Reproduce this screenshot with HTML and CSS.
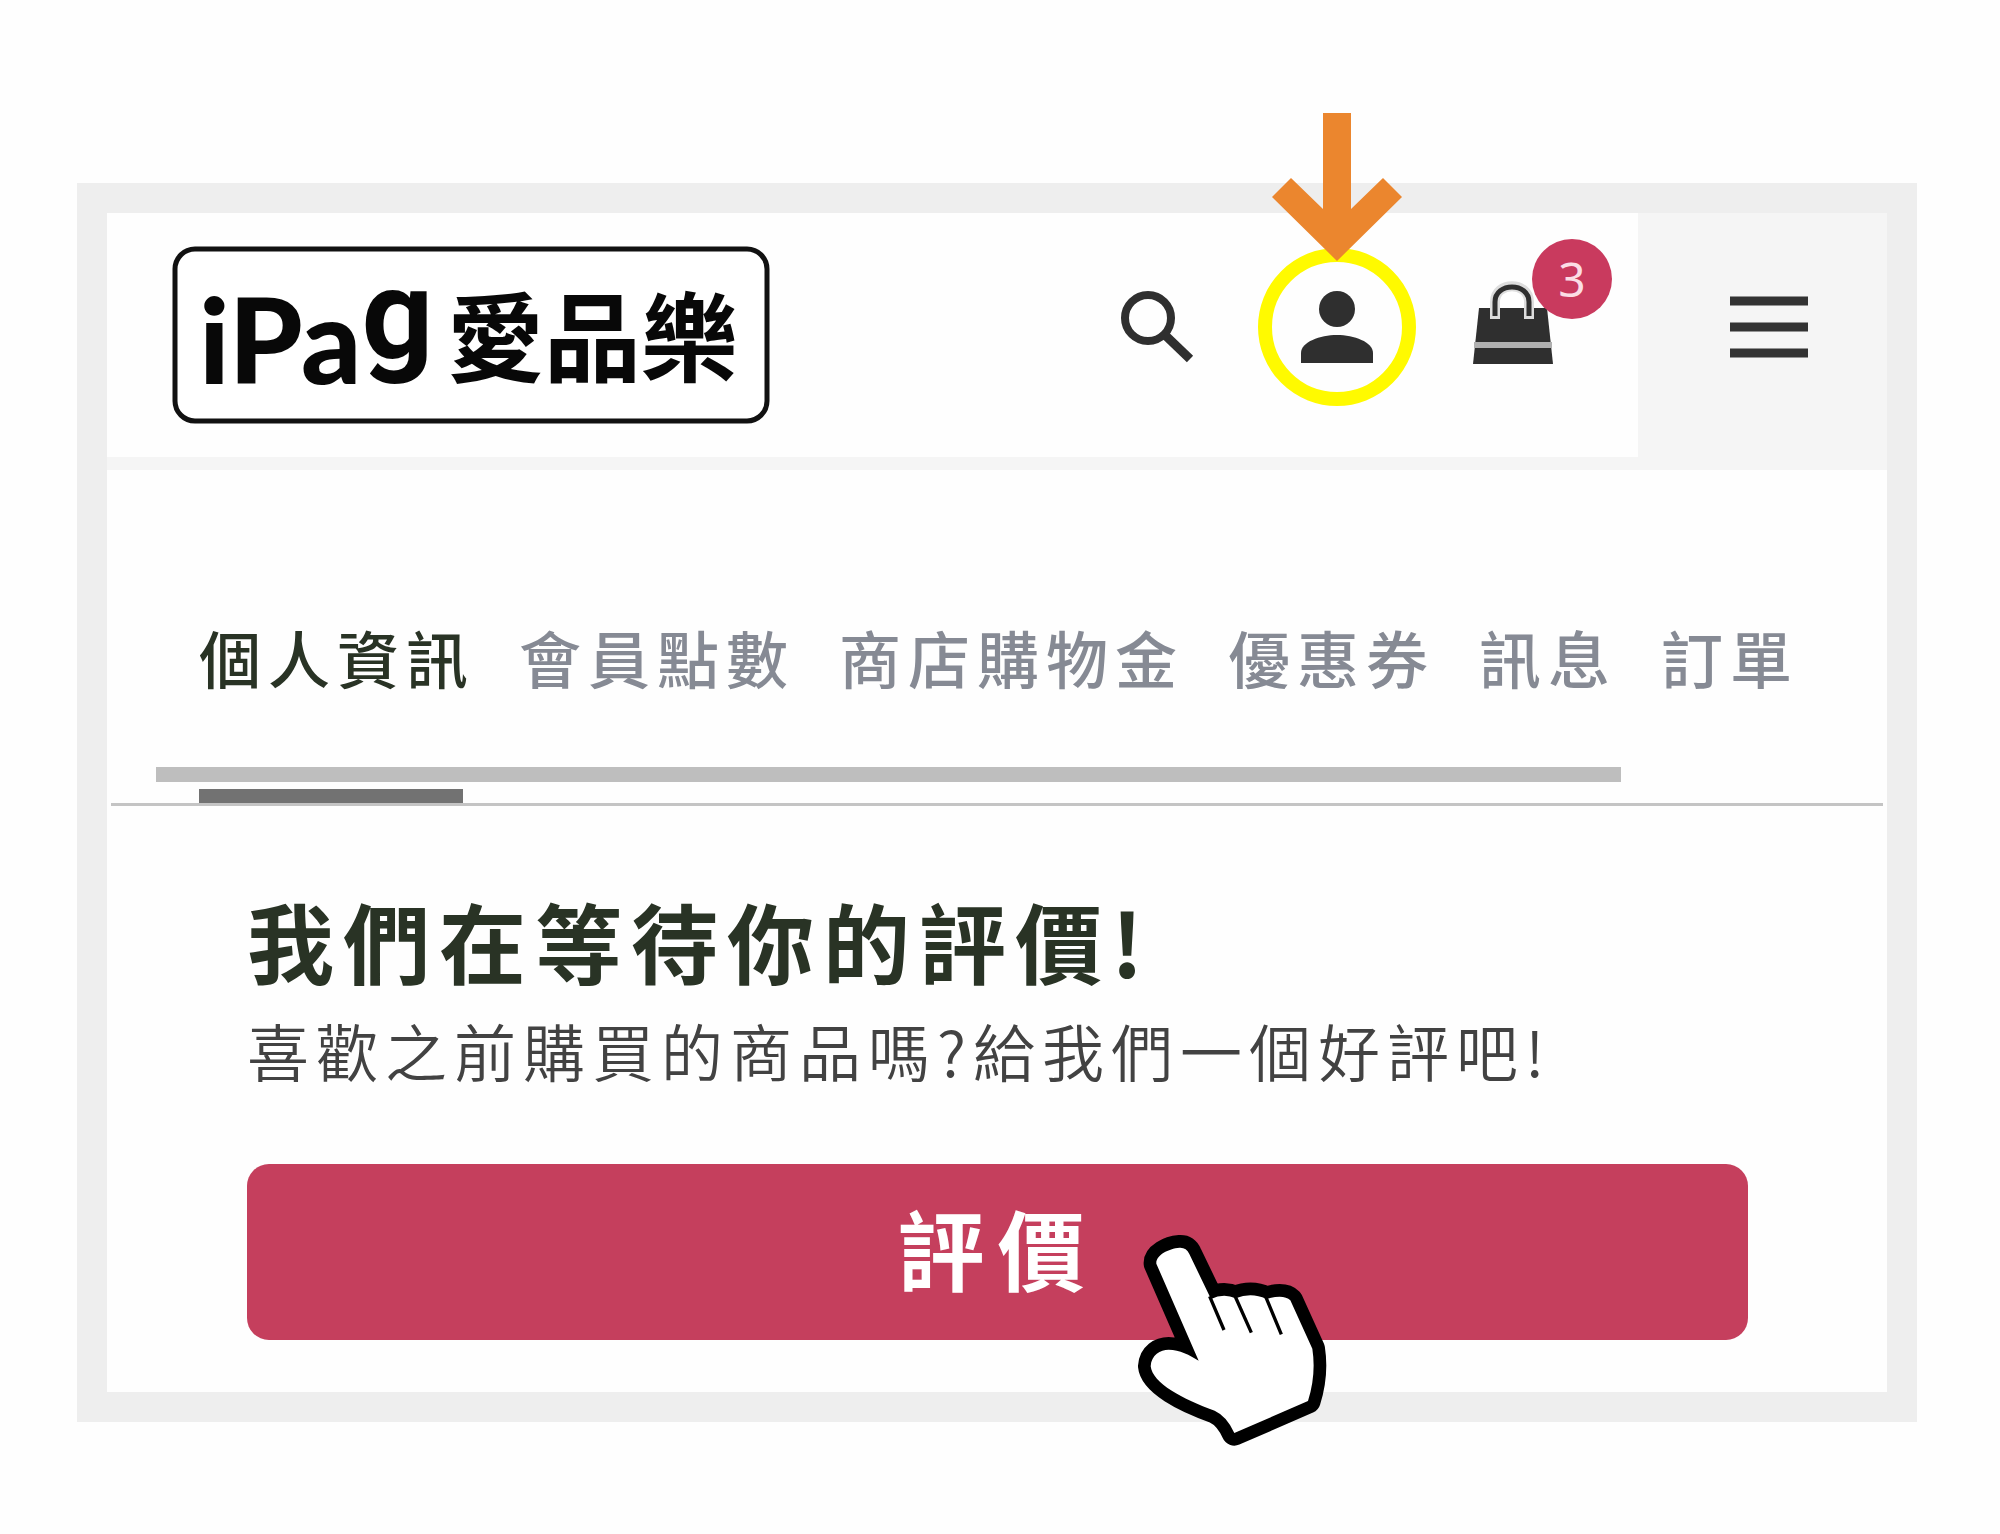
FILE: index.html
```
<!DOCTYPE html>
<html lang="zh-Hant">
<head>
    <meta charset="UTF-8">
    <meta name="viewport" content="width=device-width, initial-scale=1.0">
    <title>iPag 愛品樂</title>
    <link rel="stylesheet" href="styles.css">
</head>
<body>
    <div class="frame">
        <header class="header">
            <a class="logo" href="#" aria-label="iPag 愛品樂">
                <svg width="598" height="178" viewBox="0 0 598 178">
                    <rect x="3" y="3" width="592" height="172" rx="20" fill="#fff" stroke="#111" stroke-width="5"/>
                    <text class="logo-latin" x="27" y="138">iPa<tspan class="logo-g" dy="-26">g</tspan></text>
                    <text class="logo-cjk" x="275" y="128">愛品樂</text>
                </svg>
            </a>
            <div class="tools">
                <button class="tool" type="button" aria-label="搜尋">
                    <svg width="80" height="80" viewBox="0 0 80 80">
                        <circle cx="27" cy="31" r="23" fill="none" stroke="#2f2f2f" stroke-width="8"/>
                        <path d="M44 48 L69 72" stroke="#2f2f2f" stroke-width="9"/>
                    </svg>
                </button>
                <button class="tool account" type="button" aria-label="會員">
                    <svg width="74" height="80" viewBox="0 0 74 80">
                        <circle cx="37" cy="22" r="18" fill="#2f2f2f"/>
                        <path d="M1 76 V66 C1 55 20 48 37 48 S73 55 73 66 V76 Z" fill="#2f2f2f"/>
                    </svg>
                    <svg class="arrow" width="130" height="148" viewBox="0 0 130 148">
                        <path d="M51 0 H79 V96 L111 65 L130 84 L65 148 L0 84 L19 65 L51 96 Z" fill="#eb862e"/>
                    </svg>
                </button>
                <button class="tool cart" type="button" aria-label="購物車">
                    <svg width="80" height="84" viewBox="0 3 80 84">
                        <path d="M6 26 H74 L80 82 H0 Z" fill="#2f2f2f"/>
                        <path d="M1 63 H79" stroke="#b0b0b0" stroke-width="6"/>
                        <path d="M22 37 V20 C22 -1 56 -1 56 20 V37" fill="none" stroke="#ddd" stroke-width="10"/>
                        <path d="M22 34 V20 C22 0 56 0 56 20 V34" fill="none" stroke="#2f2f2f" stroke-width="5"/>
                    </svg>
                    <span class="badge">3</span>
                </button>
            </div>
            <button class="menu" type="button" aria-label="選單">
                <svg width="78" height="64" viewBox="0 0 78 64">
                    <path d="M0 7 H78 M0 33 H78 M0 59 H78" stroke="#333" stroke-width="9"/>
                </svg>
            </button>
        </header>

        <nav class="tabs">
            <a href="#" class="active">個人資訊</a>
            <a href="#">會員點數</a>
            <a href="#">商店購物金</a>
            <a href="#">優惠券</a>
            <a href="#">訊息</a>
            <a href="#">訂單</a>
        </nav>
        <div class="scrollbar"></div>
        <div class="indicator"></div>
        <hr class="divider">

        <main class="review">
            <h1>我們在等待你的評價!</h1>
            <p>喜歡之前購買的商品嗎?給我們一個好評吧!</p>
            <div class="action">
                <button class="rate" type="button">評價</button>
                <svg class="hand" width="190" height="214" viewBox="115 98 570 642">
                    <g stroke-linejoin="round">
                        <path d="M170 187 C168 162 205 142 240 139 Q260 138 269 158 L334 293 Q372 275 408 291 Q455 272 500 293 Q552 277 572 297 L638 442 Q650 520 625 599 L404 695 Q382 645 345 628 C250 595 158 545 153 495 C155 460 182 445 207 445 C240 445 270 461 297 478 Z" fill="#000" stroke="#000" stroke-width="76"/>
                        <path d="M170 187 C168 162 205 142 240 139 Q260 138 269 158 L334 293 Q372 275 408 291 Q455 272 500 293 Q552 277 572 297 L638 442 Q650 520 625 599 L404 695 Q382 645 345 628 C250 595 158 545 153 495 C155 460 182 445 207 445 C240 445 270 461 297 478 Z" fill="#fff"/>
                    </g>
                    <path d="M330 285 L373 386 M406 284 L455 394 M498 286 L545 399" stroke="#000" stroke-width="10"/>
                </svg>
            </div>
        </main>
    </div>
</body>
</html>
```
FILE: styles.css
```
* {
    box-sizing: border-box;
}
body {
    margin: 0;
    padding: 183px 83px 112px 77px;
    background: #fefefe;
    font-family: "Noto Sans CJK TC", "Noto Sans", sans-serif;
}
button {
    border: 0;
    padding: 0;
    background: none;
    font-family: inherit;
    cursor: pointer;
}
svg {
    display: block;
    overflow: visible;
}
.frame {
    border: 30px solid #eee;
    background: #fefefe;
}

/* Header */
.header {
    display: flex;
    align-items: center;
    min-height: 244px;
    padding-left: 65px;
    box-shadow: 0 13px 0 #f5f5f5;
}
.logo-latin {
    font-family: Lato, "Noto Sans", sans-serif;
    font-size: 118px;
    font-weight: 900;
    fill: #080808;
}
.logo-g {
    font-family: Roboto, "Liberation Sans", sans-serif;
    font-size: 126px;
    font-weight: 700;
}
.logo-cjk {
    font-size: 97px;
    font-weight: 700;
    fill: #080808;
}
.tools {
    display: flex;
    align-items: center;
    gap: 57px;
    margin-left: auto;
    padding: 0 85px 16px 0;
}
.tool {
    position: relative;
}
.account {
    display: flex;
    align-items: center;
    justify-content: center;
    width: 158px;
    height: 158px;
    border: 14px solid #fffa00;
    border-radius: 50%;
}
.arrow {
    position: absolute;
    left: 0;
    bottom: 131px;
}
.badge {
    position: absolute;
    left: 59px;
    top: -46px;
    width: 80px;
    height: 80px;
    border-radius: 50%;
    background: #c93a5e;
    color: #fbdde5;
    font-family: "Noto Sans", sans-serif;
    font-size: 48px;
    line-height: 80px;
    text-align: center;
}
.menu {
    display: flex;
    align-items: center;
    justify-content: center;
    align-self: stretch;
    width: 249px;
    padding: 0 0 18px 12px;
    background: #f5f5f5;
}

/* Tabs */
.tabs {
    display: flex;
    gap: 44px;
    margin-top: 160px;
    padding-left: 92px;
    font-size: 62px;
    font-weight: 500;
    line-height: 80px;
    letter-spacing: 7px;
    white-space: nowrap;
}
.tabs a {
    color: #868a94;
    text-decoration: none;
}
.tabs a.active {
    color: #293325;
}
.scrollbar {
    height: 15px;
    margin: 70px 266px 0 49px;
    background: #bebebe;
}
.indicator {
    width: 264px;
    height: 14px;
    margin: 7px 0 0 92px;
    background: #727272;
}
.divider {
    height: 3px;
    margin: 0 4px;
    border: 0;
    background: #c4c4c4;
}

/* Review */
.review {
    padding: 84px 139px 52px 140px;
}
.review h1 {
    margin: 0;
    color: #293325;
    font-size: 87px;
    font-weight: 700;
    line-height: 100px;
    letter-spacing: 9px;
}
.review p {
    margin: 20px 0 74px;
    color: #424242;
    font-size: 62px;
    font-weight: 350;
    line-height: 80px;
    letter-spacing: 7px;
}
.action {
    position: relative;
}
.rate {
    display: block;
    width: 100%;
    height: 176px;
    padding-bottom: 10px;
    border-radius: 22px;
    background: #c53f5d;
    color: #fff;
    font-size: 87px;
    font-weight: 700;
    letter-spacing: 13px;
}
.hand {
    position: absolute;
    top: 70px;
    right: 420px;
    pointer-events: none;
}
```
